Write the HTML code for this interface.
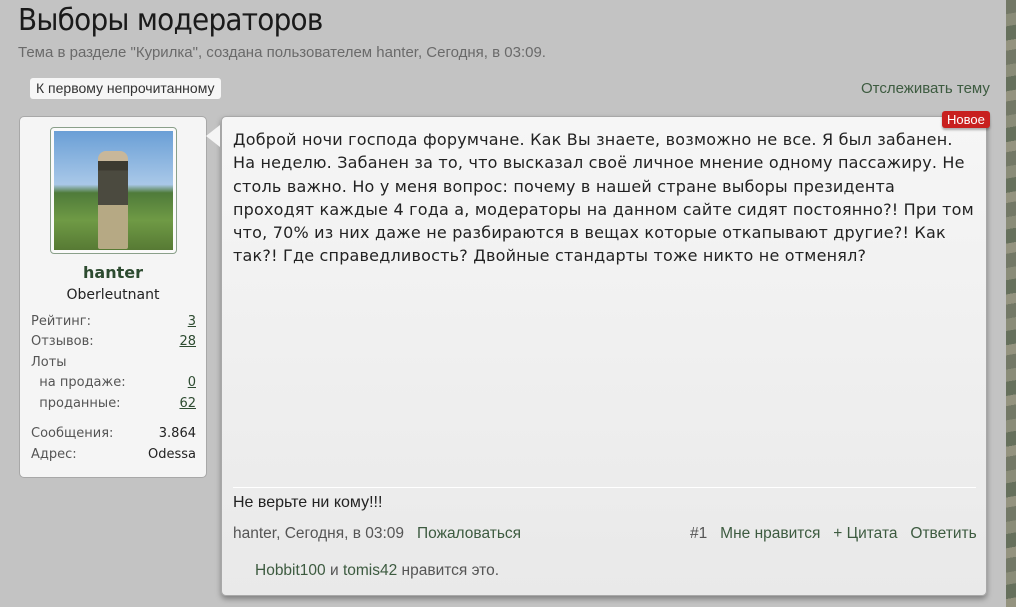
<!DOCTYPE html>
<html><head><meta charset="utf-8"><style>
*{margin:0;padding:0;box-sizing:border-box}
body{width:1016px;height:607px;overflow:hidden;background:#c3c3c3;position:relative;font-family:"Liberation Sans",sans-serif}
.strip{position:absolute;left:1006px;top:0;width:10px;height:607px;background:repeating-linear-gradient(170deg,#737866 0 14px,#8a8c78 14px 26px,#66705c 26px 40px,#94937f 40px 50px)}
.abs{position:absolute;white-space:nowrap}
h1{position:absolute;left:18px;top:3px;font-weight:normal;font-size:30px;color:#1a1a1a;font-family:"DejaVu Sans",sans-serif;letter-spacing:-0.8px;transform:scaleX(0.93);transform-origin:left}
.sub{left:18px;top:44px;font-size:15px;color:#6a6a6a}
.btn{left:30px;top:78px;background:#f6f6f6;border-radius:3px;padding:2px 6px;font-size:14px;color:#333;height:21px}
.track{left:861px;top:80px;font-size:15px;color:#3d5b40}
.side{position:absolute;left:19px;top:116px;width:188px;height:362px;background:#f5f5f5;border:1px solid #a8a8a8;border-radius:5px}
.av{position:absolute;left:30px;top:10px;width:127px;height:127px;border:1px solid #8aa08a;border-radius:4px;background:#fafafa;padding:3px}
.av>.pic{width:100%;height:100%;background:linear-gradient(#6a9fd6 0,#a9c8e8 45%,#4f7b3a 52%,#6f9a45 75%,#577a34 100%);position:relative}
.man{position:absolute;left:44px;top:20px;width:30px;height:98px;background:linear-gradient(#c8b79a 0 10%,#3c3a30 10% 20%,#4b4a3f 20% 55%,#b6a984 55% 100%);border-radius:8px 8px 2px 2px}
.name{position:absolute;left:0;width:186px;top:146px;text-align:center;font-weight:bold;font-size:16px;color:#2d4b30;font-family:"DejaVu Sans",sans-serif}
.rank{position:absolute;left:0;width:186px;top:170px;text-align:center;font-size:14px;color:#222;font-family:"DejaVu Sans",sans-serif}
.row{position:absolute;left:11px;width:165px;font-size:13px;color:#555;font-family:"DejaVu Sans",sans-serif}
.row span{position:absolute;right:0;color:#2d4b30;text-decoration:underline}
.row span.n{text-decoration:none;color:#222}
.post{position:absolute;left:221px;top:116px;width:766px;height:480px;background:linear-gradient(#f6f6f6,#e9e9e9);border:1px solid #a8a8a8;border-radius:5px;box-shadow:0 3px 6px rgba(0,0,0,.35)}
.nub{position:absolute;left:206px;top:125px;width:14px;height:22px;background:#f5f5f5;clip-path:polygon(100% 0,0 50%,100% 100%)}
.txt{left:233px;top:128px;font-size:16px;line-height:23.3px;color:#222;font-family:"DejaVu Sans",sans-serif;letter-spacing:0.2px}
.new{left:942px;top:111px;background:#c8201f;color:#fff;font-size:13px;padding:1px 5px;border-radius:3px;box-shadow:0 2px 2px rgba(0,0,0,.3)}
.hr{position:absolute;left:233px;top:487px;width:743px;height:1px;background:#fff}
.sig{left:233px;top:494px;font-size:16px;color:#222}
.meta{top:525px;font-size:15.5px;color:#555}
.g{color:#3d5b40}
</style></head><body>
<div class="strip"></div>
<h1>Выборы модераторов</h1>
<div class="abs sub">Тема в разделе "Курилка", создана пользователем hanter, Сегодня, в 03:09.</div>
<div class="abs btn">К первому непрочитанному</div>
<div class="abs track">Отслеживать тему</div>
<div class="side">
 <div class="av"><div class="pic"><div class="man"></div></div></div>
 <div class="name">hanter</div>
 <div class="rank">Oberleutnant</div>
 <div class="row" style="top:197px">Рейтинг:<span>3</span></div>
 <div class="row" style="top:217px">Отзывов:<span>28</span></div>
 <div class="row" style="top:238px">Лоты</div>
 <div class="row" style="top:258px">&nbsp;&nbsp;на продаже:<span>0</span></div>
 <div class="row" style="top:279px">&nbsp;&nbsp;проданные:<span>62</span></div>
 <div class="row" style="top:309px">Сообщения:<span class="n">3.864</span></div>
 <div class="row" style="top:330px">Адрес:<span class="n">Odessa</span></div>
</div>
<div class="post"></div>
<div class="nub"></div>
<div class="abs txt">Доброй ночи господа форумчане. Как Вы знаете, возможно не все. Я был забанен.<br>На неделю. Забанен за то, что высказал своё личное мнение одному пассажиру. Не<br>столь важно. Но у меня вопрос: почему в нашей стране выборы президента<br>проходят каждые 4 года а, модераторы на данном сайте сидят постоянно?! При том<br>что, 70% из них даже не разбираются в вещах которые откапывают другие?! Как<br>так?! Где справедливость? Двойные стандарты тоже никто не отменял?</div>
<div class="abs new">Новое</div>
<div class="hr"></div>
<div class="abs sig">Не верьте ни кому!!!</div>
<div class="abs meta" style="left:233px">hanter, Сегодня, в 03:09 &nbsp;&nbsp;<span class="g">Пожаловаться</span></div>
<div class="abs meta" style="left:690px">#1 &nbsp;&nbsp;<span class="g">Мне нравится &nbsp;&nbsp;+ Цитата &nbsp;&nbsp;Ответить</span></div>
<div class="abs meta" style="left:255px;top:562px"><span class="g">Hobbit100</span> и <span class="g">tomis42</span> нравится это.</div>
</body></html>
